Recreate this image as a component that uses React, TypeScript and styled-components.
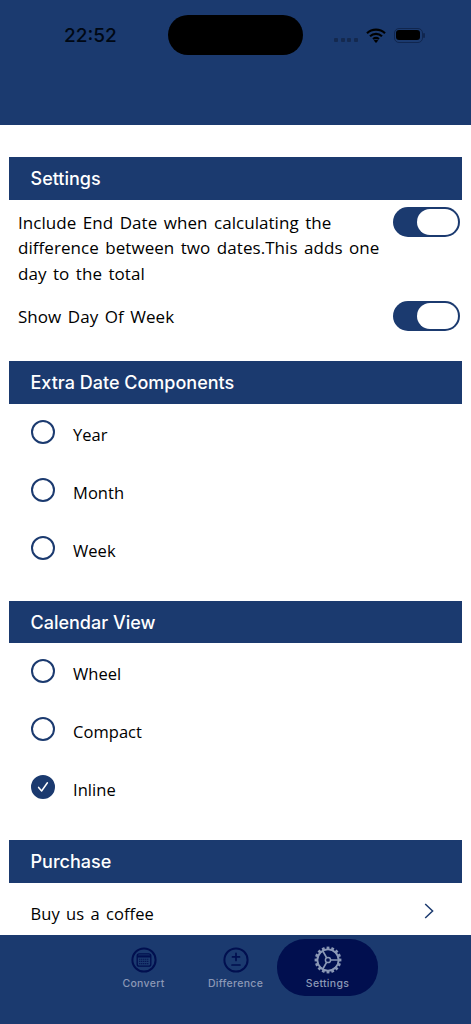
import React from 'react';
import styled, {createGlobalStyle} from 'styled-components';

const navy = '#1b3a6f';
const deep = '#010f4f';
const muted = '#8b98b6';

const GlobalStyle = createGlobalStyle`
  html, body {
    margin: 0;
    padding: 0;
    background: #fff;
  }
  * {
    box-sizing: border-box;
  }
`

const Toggle = () => (
    <ToggleTrack>
        <ToggleKnob/>
    </ToggleTrack>
)

const Radio = ({checked}: { checked?: boolean }) => (
    <RadioCircle checked={checked}>
        {checked && (
            <svg width="14" height="14" viewBox="0 0 14 14" fill="none">
                <path d="M2.6 7.4 L5.6 11 L11.4 2.8" stroke="#fff" strokeWidth="1.5" strokeLinecap="round"
                      strokeLinejoin="round"/>
            </svg>
        )}
    </RadioCircle>
)

const OptionGroup = ({items, selected}: { items: string[], selected?: string }) => (
    <Options>
        {items.map(item => (
            <Option key={item}>
                <Radio checked={item === selected}/>
                <OptionLabel>{item}</OptionLabel>
            </Option>
        ))}
    </Options>
)

const CalendarIcon = () => (
    <svg width="26" height="26" viewBox="0 0 26 26" fill="none">
        <circle cx="13" cy="13" r="11.6" stroke={deep} strokeWidth="2"/>
        <rect x="6.2" y="6.8" width="13.6" height="12.4" rx="2" stroke={deep} strokeWidth="1.3"/>
        <path d="M6.2 9.4h13.6" stroke={deep} strokeWidth="2.2"/>
        <path d="M8 12.2h10M8 14.4h10M8 16.6h10" stroke={deep} strokeWidth="1.1" strokeDasharray="1.4 .6" opacity=".8"/>
    </svg>
)

const DifferenceIcon = () => (
    <svg width="26" height="26" viewBox="0 0 26 26" fill="none">
        <circle cx="13" cy="13" r="11.6" stroke={deep} strokeWidth="2"/>
        <path d="M13 6.4v7M9.5 9.9h7M9 18h8" stroke={deep} strokeWidth="1.7" strokeLinecap="round"/>
    </svg>
)

const GearIcon = () => {
    const teeth = Array.from({length: 16}, (_, i) => i * 22.5)
    return (
        <svg width="28" height="28" viewBox="0 0 28 28" fill="none">
            {teeth.map(a => (
                <rect key={a} x="12.6" y="0.6" width="2.8" height="3.4" fill={muted}
                      transform={`rotate(${a} 14 14)`}/>
            ))}
            <circle cx="14" cy="14" r="10.6" stroke={muted} strokeWidth="1.8"/>
            <circle cx="14" cy="14" r="2.6" stroke={muted} strokeWidth="1.5"/>
            <path d="M16.5 14h8M12.7 11.8 8.8 5M12.7 16.2 8.8 23" stroke={muted} strokeWidth="1.7"/>
        </svg>
    )
}

export default function App() {
    return (
        <Screen>
            <GlobalStyle/>
            <TopBar>
                <Time>22:52</Time>
                <Island/>
                <StatusIcons>
                    <Dots>
                        <i/><i/><i/><i/>
                    </Dots>
                    <svg width="20" height="15" viewBox="0 0 20 15" fill="none">
                        <path d="M1 5.2C6 .4 14 .4 19 5.2M4 8.2c3.4-3.1 8.6-3.1 12 0M7 11c1.8-1.4 4.2-1.4 6 0"
                              stroke="#000" strokeWidth="2.2"/>
                        <path d="M10 15 7.7 12.6c1.3-1 3.3-1 4.6 0z" fill="#000"/>
                    </svg>
                    <Battery>
                        <BatteryFill/>
                    </Battery>
                </StatusIcons>
            </TopBar>
            <Content>
                <SectionHeader>Settings</SectionHeader>
                <ToggleRow>
                    <RowText>Include End Date when calculating the difference between two dates.This adds one day to the total</RowText>
                    <Toggle/>
                </ToggleRow>
                <ToggleRow second>
                    <RowText>Show Day Of Week</RowText>
                    <Toggle/>
                </ToggleRow>
                <SectionHeader>Extra Date Components</SectionHeader>
                <OptionGroup items={['Year', 'Month', 'Week']}/>
                <SectionHeader>Calendar View</SectionHeader>
                <OptionGroup items={['Wheel', 'Compact', 'Inline']} selected="Inline"/>
                <SectionHeader>Purchase</SectionHeader>
                <LinkRow>
                    <OptionLabel>Buy us a coffee</OptionLabel>
                    <svg width="10" height="16" viewBox="0 0 10 16" fill="none">
                        <path d="M1.2 1 8.6 8 1.2 15" stroke={navy} strokeWidth="1.5"/>
                    </svg>
                </LinkRow>
            </Content>
            <TabBar>
                <Tab>
                    <CalendarIcon/>
                    <TabLabel>Convert</TabLabel>
                </Tab>
                <Tab>
                    <DifferenceIcon/>
                    <TabLabel>Difference</TabLabel>
                </Tab>
                <Tab active>
                    <GearIcon/>
                    <TabLabel>Settings</TabLabel>
                </Tab>
            </TabBar>
        </Screen>
    );
}

const Screen = styled.div`
  width: 471px;
  height: 1024px;
  display: flex;
  flex-direction: column;
  overflow: hidden;
  background: #fff;
  font-family: "Open Sans", sans-serif;
`

const TopBar = styled.header`
  height: 125px;
  flex-shrink: 0;
  background: ${navy};
  display: grid;
  grid-template-columns: 168px 135px 1fr;
  align-items: start;
  padding-top: 15px;
`

const Time = styled.div`
  padding: 1px 0 0 64px;
  height: 40px;
  line-height: 40px;
  font-family: Inter, sans-serif;
  font-size: 19px;
  font-weight: 500;
  color: #000814;
`

const Island = styled.div`
  height: 40px;
  border-radius: 20px;
  background: #000;
`

const StatusIcons = styled.div`
  height: 40px;
  display: flex;
  align-items: center;
  padding-left: 31px;
  gap: 8px;
`

const Dots = styled.div`
  display: flex;
  gap: 2.5px;
  margin-top: 10px;

  i {
    width: 4px;
    height: 4px;
    border-radius: 1px;
    background: #14294f;
  }
`

const Battery = styled.div`
  width: 29px;
  height: 15px;
  border: 1px solid #10264f;
  border-radius: 5px;
  padding: 1.5px;
  position: relative;

  &::after {
    content: '';
    position: absolute;
    right: -3px;
    top: 4px;
    width: 2px;
    height: 5px;
    border-radius: 1px;
    background: #10264f;
  }
`

const BatteryFill = styled.div`
  width: 100%;
  height: 100%;
  border-radius: 3px;
  background: #000;
`

const Content = styled.main`
  flex: 1;
  min-height: 0;
  overflow: hidden;
  padding: 32px 9px 0;
`

const SectionHeader = styled.h2`
  margin: 0;
  height: 42.7px;
  line-height: 43.5px;
  padding-left: 21.5px;
  background: ${navy};
  color: #fff;
  font-family: Inter, sans-serif;
  font-size: 18px;
  font-weight: 500;
`

const ToggleRow = styled.div<{ second?: boolean }>`
  display: flex;
  justify-content: space-between;
  align-items: flex-start;
  padding: ${p => p.second ? '15px 2px 30px 9px' : '7px 2px 0 9px'};
`

const RowText = styled.p`
  margin: 3px 0 0;
  width: 366px;
  font-size: 17px;
  font-weight: 500;
  line-height: 25.6px;
  letter-spacing: 0.05px;
  word-spacing: 2px;
  color: #000;
`

const ToggleTrack = styled.div`
  width: 67px;
  height: 30px;
  flex-shrink: 0;
  border-radius: 15px;
  background: ${navy};
  padding: 2px;
  display: flex;
  justify-content: flex-end;
`

const ToggleKnob = styled.div`
  width: 41px;
  height: 26px;
  border-radius: 13px;
  background: #fff;
`

const Options = styled.div`
  display: flex;
  flex-direction: column;
  padding: 16px 0 40.6px 22px;
  gap: 34px;
`

const Option = styled.div`
  display: flex;
  align-items: center;
  height: 24px;
  gap: 18px;
`

const RadioCircle = styled.span<{ checked?: boolean }>`
  width: 24px;
  height: 24px;
  border-radius: 50%;
  border: 2px solid ${navy};
  background: ${p => p.checked ? navy : 'transparent'};
  display: flex;
  align-items: center;
  justify-content: center;
`

const OptionLabel = styled.span`
  font-size: 16.5px;
  font-weight: 500;
  letter-spacing: 0.05px;
  word-spacing: 2px;
  color: #000;
  position: relative;
  top: 2px;
`

const LinkRow = styled.div`
  display: flex;
  align-items: center;
  justify-content: space-between;
  padding: 17px 28px 0 21.5px;
`

const TabBar = styled.nav`
  height: 89px;
  flex-shrink: 0;
  background: ${navy};
  display: flex;
  justify-content: center;
  align-items: flex-start;
  padding-top: 4px;
`

const Tab = styled.div<{ active?: boolean }>`
  width: ${p => p.active ? '101px' : '92px'};
  margin: ${p => p.active ? '0 -4.5px' : '0'};
  height: 57px;
  border-radius: 28px;
  background: ${p => p.active ? deep : 'transparent'};
  display: flex;
  flex-direction: column;
  align-items: center;
  padding-top: ${p => p.active ? '7px' : '8px'};
  gap: ${p => p.active ? '3px' : '4px'};
`

const TabLabel = styled.span`
  font-family: Inter, sans-serif;
  font-size: 10.5px;
  letter-spacing: 0.3px;
  font-weight: 500;
  color: ${muted};
`
